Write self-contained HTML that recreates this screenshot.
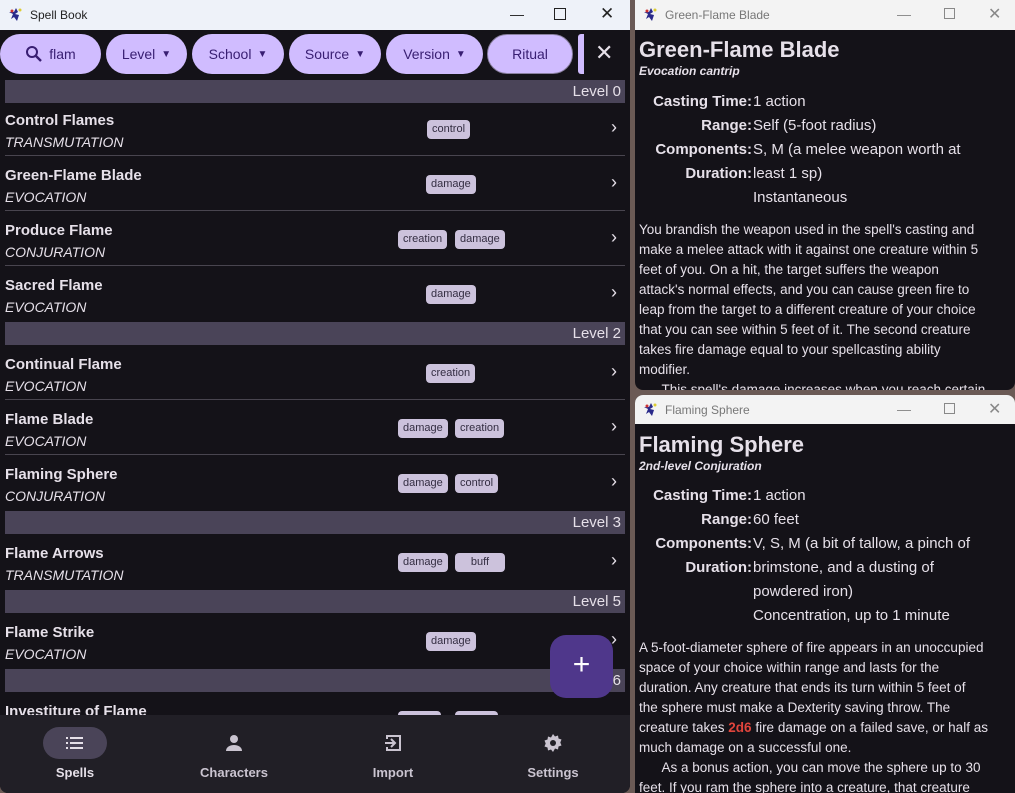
<!DOCTYPE html>
<html><head><meta charset="utf-8"><style>
*{margin:0;padding:0;box-sizing:border-box}
body{width:1015px;height:793px;overflow:hidden;background:#6b5a55;font-family:"Liberation Sans",sans-serif;position:relative}
.win{position:absolute;background:#141218;overflow:hidden}
.tb{position:absolute;left:0;top:0;right:0;height:30px;background:#eef2f9;font-size:12px;color:#222}
.tb .t{position:absolute;left:30px;top:8px}
.ic{position:absolute;left:8px;top:7px;width:16px;height:16px}
.ctl{position:absolute;top:6px;font-size:14px;color:#222}
.chip{position:absolute;top:34px;height:40px;border-radius:20px;background:#d0bcff;color:#381e72;font-size:14px;display:flex;align-items:center;justify-content:center;gap:6px}
.hdr{position:absolute;left:5px;width:620px;height:23px;background:#4a4458;color:#e6e0e9;font-size:15px;text-align:right;padding-right:4px;line-height:23px}
.row{position:absolute;left:5px;width:620px;height:55px;border-bottom:1px solid #49454f;color:#e6e0e9}
.row .n{position:absolute;left:0;top:11px;font-weight:bold;font-size:15px}
.row .s{position:absolute;left:0;top:33px;font-style:italic;font-size:14px}
.tag{position:absolute;top:19px;height:19px;background:#ccc2dc;color:#332d41;border-radius:4px;font-size:11px;line-height:19px;padding:0 5px}
.chev{position:absolute;right:8px;top:16px;font-size:18px;color:#e6e0e9}
.nav{position:absolute;left:0;top:715px;width:630px;height:78px;background:#211f26;color:#cac4d0;font-size:13px}
.nav div{position:absolute;top:50px;width:100px;text-align:center;font-weight:bold}
.dt{color:#e6e0e9;position:absolute;font-size:15px}
.lb{position:absolute;font-weight:bold;font-size:15px;text-align:right;width:114px;left:3px}
.vl{position:absolute;left:118px;font-size:15px}
.body{position:absolute;left:4px;font-size:13.5px;line-height:20px;color:#e6e0e9;white-space:nowrap}
</style></head><body>

<div class="win" style="left:0;top:0;width:630px;height:793px;border-radius:0 0 8px 8px">
 <div class="tb"><svg class="ic" viewBox="0 0 16 16"><path d="M8 1l2 4-3 2 4 1-2 6-3-4-3 2 2-5-4-2 5 0z" fill="#2a2a8a"/><circle cx="4" cy="4" r="1.5" fill="#c33"/><circle cx="12" cy="3" r="1.5" fill="#dc3"/></svg><span class="t">Spell Book</span>
 <span class="ctl" style="left:510px">—</span><span class="ctl" style="left:554px;top:5px;width:12px;height:12px;border:1.5px solid #222;margin-top:3px"></span><span class="ctl" style="left:600px;font-size:17px;top:4px">✕</span></div>
 <div class="chip" style="left:0;width:101px"><svg width="18" height="18" viewBox="0 0 18 18"><circle cx="7" cy="7" r="5" fill="none" stroke="#381e72" stroke-width="2"/><path d="M11 11l5 5" stroke="#381e72" stroke-width="2.4"/></svg>flam</div>
 <div class="chip" style="left:106px;width:81px">Level <span style="font-size:10px">▼</span></div>
 <div class="chip" style="left:192px;width:92px">School <span style="font-size:10px">▼</span></div>
 <div class="chip" style="left:289px;width:92px">Source <span style="font-size:10px">▼</span></div>
 <div class="chip" style="left:386px;width:97px">Version <span style="font-size:10px">▼</span></div>
 <div class="chip" style="left:487px;width:86px;border:1px solid #8a80a0">Ritual</div>
 <div class="chip" style="left:578px;width:6px;border-radius:3px 0 0 3px"></div>
 <div style="position:absolute;left:595px;top:40px;color:#e6e0e9;font-size:22px">✕</div>

 <div class="hdr" style="top:80px">Level 0</div>
 <div class="row" style="top:101px"><div class="n">Control Flames</div><div class="s">TRANSMUTATION</div><span class="tag" style="left:422px">control</span><span class="chev">›</span></div>
 <div class="row" style="top:156px"><div class="n">Green-Flame Blade</div><div class="s">EVOCATION</div><span class="tag" style="left:421px">damage</span><span class="chev">›</span></div>
 <div class="row" style="top:211px"><div class="n">Produce Flame</div><div class="s">CONJURATION</div><span class="tag" style="left:393px">creation</span><span class="tag" style="left:450px">damage</span><span class="chev">›</span></div>
 <div class="row" style="top:266px;border:none"><div class="n">Sacred Flame</div><div class="s">EVOCATION</div><span class="tag" style="left:421px">damage</span><span class="chev">›</span></div>
 <div class="hdr" style="top:322px">Level 2</div>
 <div class="row" style="top:345px"><div class="n">Continual Flame</div><div class="s">EVOCATION</div><span class="tag" style="left:421px">creation</span><span class="chev">›</span></div>
 <div class="row" style="top:400px"><div class="n">Flame Blade</div><div class="s">EVOCATION</div><span class="tag" style="left:393px">damage</span><span class="tag" style="left:450px">creation</span><span class="chev">›</span></div>
 <div class="row" style="top:455px;border:none"><div class="n">Flaming Sphere</div><div class="s">CONJURATION</div><span class="tag" style="left:393px">damage</span><span class="tag" style="left:450px">control</span><span class="chev">›</span></div>
 <div class="hdr" style="top:511px">Level 3</div>
 <div class="row" style="top:534px;border:none"><div class="n">Flame Arrows</div><div class="s">TRANSMUTATION</div><span class="tag" style="left:393px">damage</span><span class="tag" style="left:450px;width:50px;text-align:center">buff</span><span class="chev">›</span></div>
 <div class="hdr" style="top:590px">Level 5</div>
 <div class="row" style="top:613px;border:none"><div class="n">Flame Strike</div><div class="s">EVOCATION</div><span class="tag" style="left:421px">damage</span><span class="chev">›</span></div>
 <div class="hdr" style="top:669px">Level 6</div>
 <div class="row" style="top:692px;border:none"><div class="n">Investiture of Flame</div><span class="tag" style="left:393px;width:43px"></span><span class="tag" style="left:450px;width:43px"></span></div>
 <div style="position:absolute;left:550px;top:635px;width:63px;height:63px;border-radius:16px;background:#4f378b;color:#fff;font-size:30px;text-align:center;line-height:60px">+</div>

 <div class="nav">
  <span style="position:absolute;left:43px;top:12px;width:64px;height:32px;border-radius:16px;background:#4a4458"></span>
  <svg style="position:absolute;left:65px;top:20px" width="20" height="16" viewBox="0 0 20 16"><g fill="#e6e0e9"><rect x="1" y="2" width="2" height="2"/><rect x="5" y="2" width="13" height="2"/><rect x="1" y="7" width="2" height="2"/><rect x="5" y="7" width="13" height="2"/><rect x="1" y="12" width="2" height="2"/><rect x="5" y="12" width="13" height="2"/></g></svg>
  <svg style="position:absolute;left:224px;top:18px" width="20" height="20" viewBox="0 0 20 20"><circle cx="10" cy="6" r="4" fill="#cac4d0"/><path d="M2 18c0-4 4-6 8-6s8 2 8 6z" fill="#cac4d0"/></svg>
  <svg style="position:absolute;left:383px;top:18px" width="20" height="20" viewBox="0 0 20 20"><path d="M4 6V3h13v14H4v-3" fill="none" stroke="#cac4d0" stroke-width="2"/><path d="M2 10h9M8 6l4 4-4 4" fill="none" stroke="#cac4d0" stroke-width="2"/></svg>
  <svg style="position:absolute;left:543px;top:18px" width="20" height="20" viewBox="0 0 20 20"><path d="M10 1l2 2.5 3-1 .5 3 3 1-1.2 3 1.2 3-3 1-.5 3-3-1L10 19l-2-2.5-3 1-.5-3-3-1 1.2-3-1.2-3 3-1 .5-3 3 1z" fill="#cac4d0"/><circle cx="10" cy="10" r="3" fill="#211f26"/></svg>
  <div style="left:25px;color:#e6e0e9">Spells</div>
  <div style="left:184px">Characters</div>
  <div style="left:343px">Import</div>
  <div style="left:503px">Settings</div>
 </div>
</div>

<div class="win" style="left:635px;top:0;width:380px;height:390px;border-radius:0 0 8px 8px">
 <div class="tb" style="background:#f3f3f3;color:#777"><svg class="ic" viewBox="0 0 16 16"><path d="M8 1l2 4-3 2 4 1-2 6-3-4-3 2 2-5-4-2 5 0z" fill="#2a2a8a"/><circle cx="4" cy="4" r="1.5" fill="#c33"/><circle cx="12" cy="3" r="1.5" fill="#dc3"/></svg><span class="t">Green-Flame Blade</span>
 <span class="ctl" style="left:262px;color:#888">—</span><span class="ctl" style="left:309px;top:3px;width:11px;height:11px;border:1px solid #888;margin-top:5px"></span><span class="ctl" style="left:353px;color:#888;font-size:16px;top:4px">✕</span></div>
 <div class="dt" style="left:4px;top:37px;font-size:22px;font-weight:bold">Green-Flame Blade</div>
 <div class="dt" style="left:4px;top:64px;font-size:12px;font-style:italic;font-weight:bold">Evocation cantrip</div>
 <div class="dt lb" style="top:93px">Casting Time:</div><div class="dt vl" style="top:93px">1 action</div>
 <div class="dt lb" style="top:117px">Range:</div><div class="dt vl" style="top:117px">Self (5-foot radius)</div>
 <div class="dt lb" style="top:141px">Components:</div><div class="dt vl" style="top:141px">S, M (a melee weapon worth at</div>
 <div class="dt lb" style="top:165px">Duration:</div><div class="dt vl" style="top:165px">least 1 sp)</div>
 <div class="dt vl" style="top:189px">Instantaneous</div>
 <div class="body" style="top:220px">You brandish the weapon used in the spell's casting and<br>make a melee attack with it against one creature within 5<br>feet of you. On a hit, the target suffers the weapon<br>attack's normal effects, and you can cause green fire to<br>leap from the target to a different creature of your choice<br>that you can see within 5 feet of it. The second creature<br>takes fire damage equal to your spellcasting ability<br>modifier.<br>&nbsp;&nbsp;&nbsp;&nbsp;&nbsp;&nbsp;This spell's damage increases when you reach certain</div>
</div>

<div class="win" style="left:635px;top:395px;width:380px;height:398px;border-radius:8px 8px 0 0">
 <div class="tb" style="background:#f3f3f3;color:#777;height:29px"><svg class="ic" viewBox="0 0 16 16"><path d="M8 1l2 4-3 2 4 1-2 6-3-4-3 2 2-5-4-2 5 0z" fill="#2a2a8a"/><circle cx="4" cy="4" r="1.5" fill="#c33"/><circle cx="12" cy="3" r="1.5" fill="#dc3"/></svg><span class="t">Flaming Sphere</span>
 <span class="ctl" style="left:262px;color:#888">—</span><span class="ctl" style="left:309px;top:3px;width:11px;height:11px;border:1px solid #888;margin-top:5px"></span><span class="ctl" style="left:353px;color:#888;font-size:16px;top:4px">✕</span></div>
 <div class="dt" style="left:4px;top:37px;font-size:22px;font-weight:bold">Flaming Sphere</div>
 <div class="dt" style="left:4px;top:64px;font-size:12px;font-style:italic;font-weight:bold">2nd-level Conjuration</div>
 <div class="dt lb" style="top:92px">Casting Time:</div><div class="dt vl" style="top:92px">1 action</div>
 <div class="dt lb" style="top:116px">Range:</div><div class="dt vl" style="top:116px">60 feet</div>
 <div class="dt lb" style="top:140px">Components:</div><div class="dt vl" style="top:140px">V, S, M (a bit of tallow, a pinch of</div>
 <div class="dt lb" style="top:164px">Duration:</div><div class="dt vl" style="top:164px">brimstone, and a dusting of</div>
 <div class="dt vl" style="top:188px">powdered iron)</div>
 <div class="dt vl" style="top:212px">Concentration, up to 1 minute</div>
 <div class="body" style="top:243px">A 5-foot-diameter sphere of fire appears in an unoccupied<br>space of your choice within range and lasts for the<br>duration. Any creature that ends its turn within 5 feet of<br>the sphere must make a Dexterity saving throw. The<br>creature takes <b style="color:#e0443c">2d6</b> fire damage on a failed save, or half as<br>much damage on a successful one.<br>&nbsp;&nbsp;&nbsp;&nbsp;&nbsp;&nbsp;As a bonus action, you can move the sphere up to 30<br>feet. If you ram the sphere into a creature, that creature</div>
</div>
</body></html>
